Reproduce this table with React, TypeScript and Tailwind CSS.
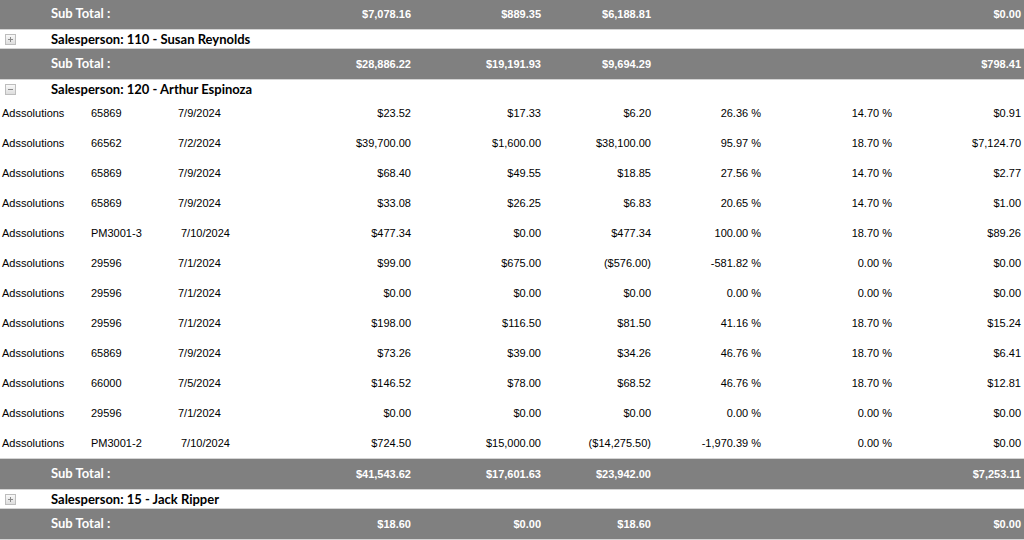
import { Fragment } from "react";

type Row = {
  company: string;
  doc: string;
  date: string;
  sale: string;
  cost: string;
  profit: string;
  margin: string;
  rate: string;
  commission: string;
};

type Group = {
  name: string;
  expanded: boolean;
  rows: Row[];
  total: { sale: string; cost: string; profit: string; commission: string };
};

const groups: Group[] = [
  {
    name: "Salesperson: 110 - Susan Reynolds",
    expanded: false,
    rows: [],
    total: { sale: "$28,886.22", cost: "$19,191.93", profit: "$9,694.29", commission: "$798.41" },
  },
  {
    name: "Salesperson: 120 - Arthur Espinoza",
    expanded: true,
    rows: [
      { company: "Adssolutions", doc: "65869", date: "7/9/2024", sale: "$23.52", cost: "$17.33", profit: "$6.20", margin: "26.36 %", rate: "14.70 %", commission: "$0.91" },
      { company: "Adssolutions", doc: "66562", date: "7/2/2024", sale: "$39,700.00", cost: "$1,600.00", profit: "$38,100.00", margin: "95.97 %", rate: "18.70 %", commission: "$7,124.70" },
      { company: "Adssolutions", doc: "65869", date: "7/9/2024", sale: "$68.40", cost: "$49.55", profit: "$18.85", margin: "27.56 %", rate: "14.70 %", commission: "$2.77" },
      { company: "Adssolutions", doc: "65869", date: "7/9/2024", sale: "$33.08", cost: "$26.25", profit: "$6.83", margin: "20.65 %", rate: "14.70 %", commission: "$1.00" },
      { company: "Adssolutions", doc: "PM3001-3", date: "7/10/2024", sale: "$477.34", cost: "$0.00", profit: "$477.34", margin: "100.00 %", rate: "18.70 %", commission: "$89.26" },
      { company: "Adssolutions", doc: "29596", date: "7/1/2024", sale: "$99.00", cost: "$675.00", profit: "($576.00)", margin: "-581.82 %", rate: "0.00 %", commission: "$0.00" },
      { company: "Adssolutions", doc: "29596", date: "7/1/2024", sale: "$0.00", cost: "$0.00", profit: "$0.00", margin: "0.00 %", rate: "0.00 %", commission: "$0.00" },
      { company: "Adssolutions", doc: "29596", date: "7/1/2024", sale: "$198.00", cost: "$116.50", profit: "$81.50", margin: "41.16 %", rate: "18.70 %", commission: "$15.24" },
      { company: "Adssolutions", doc: "65869", date: "7/9/2024", sale: "$73.26", cost: "$39.00", profit: "$34.26", margin: "46.76 %", rate: "18.70 %", commission: "$6.41" },
      { company: "Adssolutions", doc: "66000", date: "7/5/2024", sale: "$146.52", cost: "$78.00", profit: "$68.52", margin: "46.76 %", rate: "18.70 %", commission: "$12.81" },
      { company: "Adssolutions", doc: "29596", date: "7/1/2024", sale: "$0.00", cost: "$0.00", profit: "$0.00", margin: "0.00 %", rate: "0.00 %", commission: "$0.00" },
      { company: "Adssolutions", doc: "PM3001-2", date: "7/10/2024", sale: "$724.50", cost: "$15,000.00", profit: "($14,275.50)", margin: "-1,970.39 %", rate: "0.00 %", commission: "$0.00" },
    ],
    total: { sale: "$41,543.62", cost: "$17,601.63", profit: "$23,942.00", commission: "$7,253.11" },
  },
  {
    name: "Salesperson: 15 - Jack Ripper",
    expanded: false,
    rows: [],
    total: { sale: "$18.60", cost: "$0.00", profit: "$18.60", commission: "$0.00" },
  },
];

const labelFont = "font-['Lato','Open_Sans',sans-serif]";
const dataFont = "font-['Liberation_Sans',Arial,sans-serif]";

function ToggleIcon({ expanded }: { expanded: boolean }) {
  return (
    <svg width="11" height="11" viewBox="0 0 11 11" className="block">
      <defs>
        <linearGradient id="tg" x1="0" y1="0" x2="0" y2="1">
          <stop offset="0" stopColor="#fafafa" />
          <stop offset="1" stopColor="#dcdcdc" />
        </linearGradient>
      </defs>
      <rect x="0.5" y="0.5" width="10" height="10" fill="url(#tg)" stroke="#bdbdbd" />
      <rect x="3" y="5" width="5" height="1" fill="#8a8a8a" />
      {!expanded && <rect x="5" y="3" width="1" height="5" fill="#8a8a8a" />}
    </svg>
  );
}

function SubTotal({ sale, cost, profit, commission }: Group["total"]) {
  return (
    <div className="flex h-[32px] items-center border-y border-[#d4d4d4] bg-[#808080] text-white">
      <div className={`w-[297px] pl-[51px] text-[13px] font-bold ${labelFont}`}>Sub Total :</div>
      <div className={`flex items-center text-[11px] font-bold ${dataFont}`}>
        <div className="w-[114px] text-right">{sale}</div>
        <div className="w-[130px] text-right">{cost}</div>
        <div className="w-[110px] text-right">{profit}</div>
        <div className="w-[110px]" />
        <div className="w-[131px]" />
        <div className="w-[129px] text-right">{commission}</div>
      </div>
    </div>
  );
}

function GroupHeader({ name, expanded }: { name: string; expanded: boolean }) {
  return (
    <div className="flex h-[18px] items-center bg-white">
      <div className="w-[51px] pl-[5px] pt-[1px]">
        <ToggleIcon expanded={expanded} />
      </div>
      <div className={`pt-[1px] text-[13px] font-bold text-black ${labelFont}`}>{name}</div>
    </div>
  );
}

function DataRow({ row }: { row: Row }) {
  // the longer dates sit a few pixels further right in the source report
  const wide = row.date.length > 8;
  return (
    <div className={`flex h-[30px] items-center text-[11px] text-black ${dataFont}`}>
      <div className="w-[89px] pl-[2px]">{row.company}</div>
      <div className="w-[88px] pl-[2px]">{row.doc}</div>
      <div className={wide ? "w-[120px] pl-[4px]" : "w-[120px] pl-[1px]"}>{row.date}</div>
      <div className="w-[114px] text-right">{row.sale}</div>
      <div className="w-[130px] text-right">{row.cost}</div>
      <div className="w-[110px] text-right">{row.profit}</div>
      <div className="w-[110px] text-right">{row.margin}</div>
      <div className="w-[131px] text-right">{row.rate}</div>
      <div className="w-[129px] text-right">{row.commission}</div>
    </div>
  );
}

export default function App() {
  return (
    <div className="h-[540px] w-[1024px] overflow-hidden bg-white">
      <div className="-mt-[2px]">
        {/* tail of the previous salesperson, scrolled mostly out of view */}
        <SubTotal sale="$7,078.16" cost="$889.35" profit="$6,188.81" commission="$0.00" />
        {groups.map((g) => (
          <Fragment key={g.name}>
            <GroupHeader name={g.name} expanded={g.expanded} />
            {g.expanded && g.rows.map((r, i) => <DataRow key={i} row={r} />)}
            <SubTotal {...g.total} />
          </Fragment>
        ))}
      </div>
    </div>
  );
}
